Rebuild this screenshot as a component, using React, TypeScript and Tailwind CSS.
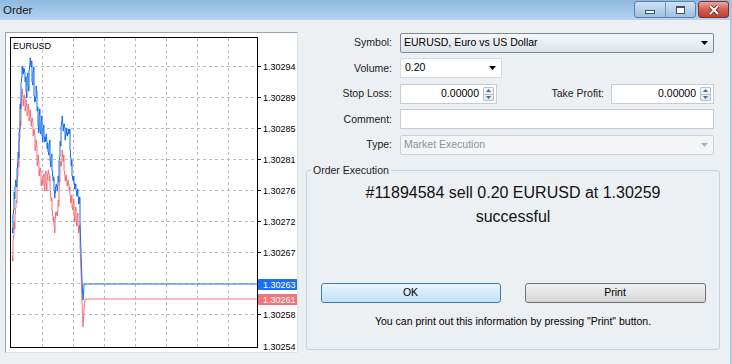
import React from 'react';

const FONT = "font-['Liberation_Sans',Arial,sans-serif]";

const blueLine = [
  [12, 228], [13, 214], [14, 192], [15, 186], [16, 184], [17, 168], [18, 152], [19, 132], [20, 104], [21, 82],
  [22, 66], [23, 74], [24, 69], [25, 82], [26, 92], [27, 76], [28, 86], [29, 70], [30, 58], [31, 67],
  [32, 82], [33, 72], [34, 96], [35, 101], [36, 86], [37, 111], [38, 126], [39, 115], [40, 131], [41, 121],
  [42, 136], [43, 128], [44, 137], [45, 141], [46, 134], [47, 149], [48, 152], [49, 145], [50, 161], [51, 157],
  [52, 171], [53, 181], [54, 191], [55, 193], [56, 184], [57, 191], [58, 176], [59, 160], [60, 141], [61, 126],
  [62, 116], [63, 131], [64, 124], [65, 140], [66, 128], [67, 136], [68, 129], [69, 133], [70, 151], [71, 166],
  [72, 176], [73, 181], [74, 183], [75, 187], [76, 191], [77, 193], [78, 197], [79, 203], [80, 222], [81, 252],
  [82, 280], [83, 300], [84, 286], [84, 284], [257, 284],
];

const redLine = [
  [12, 256], [13, 240], [14, 222], [15, 214], [16, 200], [17, 181], [18, 161], [19, 141], [20, 121], [21, 101],
  [22, 89], [23, 106], [24, 95], [25, 111], [26, 100], [27, 116], [28, 104], [29, 121], [30, 110], [31, 126],
  [32, 118], [33, 136], [34, 129], [35, 151], [36, 140], [37, 166], [38, 155], [39, 176], [40, 168], [41, 186],
  [42, 179], [43, 177], [44, 186], [45, 175], [46, 184], [47, 180], [48, 170], [49, 181], [50, 191], [51, 201],
  [52, 211], [53, 221], [54, 226], [55, 218], [56, 212], [57, 216], [58, 200], [59, 185], [60, 161], [61, 166],
  [62, 150], [63, 161], [64, 171], [65, 181], [66, 175], [67, 186], [68, 180], [69, 191], [70, 196], [71, 201],
  [72, 207], [73, 204], [74, 216], [75, 210], [76, 221], [77, 217], [78, 226], [79, 231], [80, 246], [81, 271],
  [82, 301], [83, 327], [84, 311], [85, 299], [257, 299],
];

const gridY = [66, 97, 128, 159, 190, 221, 252, 283, 314];
const gridX = [42, 73, 104, 135, 166, 197, 228];
const prices: [string, number][] = [
  ['1.30294', 66], ['1.30289', 97], ['1.30285', 128], ['1.30281', 159], ['1.30276', 190],
  ['1.30272', 221], ['1.30267', 252], ['1.30258', 314], ['1.30254', 346],
];

// tick charts are step lines with a lot of noise: add a jitter step between points
const jitter = [5, -4, 7, -6, 3, -5, 6, -3];
const steps = (a: number[][]) => {
  const out: string[] = [];
  a.forEach((p, i) => {
    out.push(`${p[0]},${p[1]}`);
    const n = a[i + 1];
    if (n && n[0] - p[0] === 1 && p[0] < 80) {
      const j = jitter[i % jitter.length];
      out.push(`${p[0] + 0.5},${p[1]}`, `${p[0] + 0.5},${p[1] + j}`, `${n[0]},${p[1] + j}`);
    }
  });
  return out.join(' ');
};

function TitleBar() {
  return (
    <div className="flex h-[20px] items-start justify-between bg-gradient-to-b from-[#8fb9e1] to-[#b3d3f0] pl-[3px] pr-[1px]">
      <span className="mt-[3px] text-[11.5px] leading-[14px] text-[#1a1a1a]">Order</span>
      <div className="mt-[1px] flex">
        <div className="flex h-[17px] overflow-hidden rounded-[3px] border border-[#5e81a8] bg-gradient-to-b from-[#cfe2f5] to-[#9ec0e2]">
          <div className="flex w-[30px] items-end justify-center pb-[3px]">
            <div className="h-[4px] w-[10px] border border-[#3b5169] bg-white" />
          </div>
          <div className="flex w-[30px] items-center justify-center border-l border-[#6f92b8]">
            <div className="h-[8px] w-[9px] border border-t-2 border-[#3b5169] bg-white" />
          </div>
        </div>
        <div className="ml-[2px] flex h-[17px] w-[31px] items-center justify-center rounded-[3px] border border-[#7d2f29] bg-gradient-to-b from-[#e8a69d] via-[#d35c50] to-[#c13f33]">
          <svg width="12" height="10" viewBox="0 0 12 10">
            <path d="M2 1l8 8M10 1L2 9" stroke="#5a1e19" strokeWidth="3.4" />
            <path d="M2 1l8 8M10 1L2 9" stroke="#ffffff" strokeWidth="2" />
          </svg>
        </div>
      </div>
    </div>
  );
}

function ChartPanel() {
  return (
    <div className="ml-[5px] mt-[12px] h-[321px] w-[293px] border border-b-[#dfe4e9] border-l-[#9aa4ae] border-r-[#dfe4e9] border-t-[#9aa4ae] bg-white">
      <svg width="291" height="319" viewBox="6 33 291 319" className="block">
        {gridY.map((y) => (
          <line key={'h' + y} x1="11" x2="257" y1={y + 0.5} y2={y + 0.5} stroke="#bcbcbc" strokeDasharray="3 3" />
        ))}
        {gridX.map((x) => (
          <line key={'v' + x} x1={x + 0.5} x2={x + 0.5} y1="38" y2="347" stroke="#bcbcbc" strokeDasharray="3 3" />
        ))}
        {gridY.map((y) => (
          <line key={'t' + y} x1="257" x2="261" y1={y + 0.5} y2={y + 0.5} stroke="#000" />
        ))}
        <polyline points={steps(redLine)} fill="none" stroke="#f2737c" strokeWidth="1" />
        <polyline points={steps(blueLine)} fill="none" stroke="#1a70f0" strokeWidth="1" />
        <rect x="10.5" y="37.5" width="247" height="310" fill="none" stroke="#000" />
        <text x="13" y="49" fontSize="9" fontFamily="Liberation Sans, Arial, sans-serif" fill="#000">
          EURUSD
        </text>
        {prices.map(([p, y]) => (
          <text key={p} x="263" y={y + 3.5} fontSize="9" fontFamily="Liberation Sans, Arial, sans-serif" fill="#000">
            {p}
          </text>
        ))}
        <rect x="258" y="279" width="39" height="11" fill="#1a70f0" />
        <text x="263" y="288" fontSize="9" fontFamily="Liberation Sans, Arial, sans-serif" fill="#fff">
          1.30263
        </text>
        <rect x="258" y="294" width="39" height="11" fill="#f2737c" />
        <text x="263" y="303" fontSize="9" fontFamily="Liberation Sans, Arial, sans-serif" fill="#fff">
          1.30261
        </text>
      </svg>
    </div>
  );
}

function Arrow({ color = '#000' }: { color?: string }) {
  return (
    <svg width="7" height="4" viewBox="0 0 7 4" className="shrink-0">
      <path d="M0 0h7L3.5 4z" fill={color} />
    </svg>
  );
}

function Spinner() {
  return (
    <div className="my-[2px] mr-[2px] flex w-[11px] flex-col rounded-[1px] border border-[#b7c4d2] bg-gradient-to-b from-[#f3f6f9] to-[#dfe7ef]">
      <div className="flex flex-1 items-center justify-center border-b border-[#b7c4d2]">
        <svg width="5" height="3" viewBox="0 0 5 3">
          <path d="M0 3h5L2.5 0z" fill="#4a6788" />
        </svg>
      </div>
      <div className="flex flex-1 items-center justify-center">
        <svg width="5" height="3" viewBox="0 0 5 3">
          <path d="M0 0h5L2.5 3z" fill="#4a6788" />
        </svg>
      </div>
    </div>
  );
}

function Label({ children, w = 'w-[94px]' }: { children: React.ReactNode; w?: string }) {
  return <div className={`${w} shrink-0 text-right`}>{children}</div>;
}

function FormPanel() {
  return (
    <div className="mt-[13px] flex flex-col text-[10.5px] text-[#1b1b1b]">
      <div className="flex flex-col gap-[5px]">
        <div className="flex h-[20px] items-center">
          <Label>Symbol:</Label>
          <div className="ml-[8px] flex h-[20px] w-[314px] items-center justify-between rounded-[2px] border border-[#7d8b99] bg-gradient-to-b from-[#f6f8fa] to-[#dde3ea] pl-[3px] pr-[5px] text-black">
            <span>EURUSD, Euro vs US Dollar</span>
            <Arrow />
          </div>
        </div>
        <div className="flex h-[21px] items-start">
          <Label>
            <div className="leading-[20px]">Volume:</div>
          </Label>
          <div className="ml-[8px] flex h-[20px] w-[102px] items-center justify-between border border-[#d3dbe3] bg-white pl-[4px] pr-[5px] text-black">
            <span>0.20</span>
            <Arrow />
          </div>
        </div>
        <div className="flex h-[20px] items-center">
          <Label>Stop Loss:</Label>
          <div className="ml-[8px] flex h-[20px] w-[97px] border border-[#c3cdd8] bg-white text-black">
            <span className="flex-1 self-center pr-[4px] text-right">0.00000</span>
            <Spinner />
          </div>
          <Label w="w-[107px]">Take Profit:</Label>
          <div className="ml-[7px] flex h-[20px] w-[103px] border border-[#c3cdd8] bg-white text-black">
            <span className="flex-1 self-center pr-[4px] text-right">0.00000</span>
            <Spinner />
          </div>
        </div>
        <div className="flex h-[21px] items-start">
          <Label>
            <div className="leading-[20px]">Comment:</div>
          </Label>
          <div className="ml-[8px] h-[20px] w-[314px] border border-[#c3cdd8] bg-white" />
        </div>
        <div className="flex h-[20px] items-center">
          <Label>Type:</Label>
          <div className="ml-[8px] flex h-[20px] w-[314px] items-center justify-between rounded-[2px] border border-[#c9d1d9] bg-[#f3f5f7] pl-[3px] pr-[5px] text-[#8a929a]">
            <span>Market Execution</span>
            <Arrow color="#aab2ba" />
          </div>
        </div>
      </div>

      <fieldset className="ml-[8px] mt-[8px] w-[414px] rounded-[3px] border border-[#c6d3e0] px-0 pb-[21px] pt-[4px]">
        <legend className="ml-[4px] px-[2px] text-[10.5px] leading-[14px]">Order Execution</legend>
        <div className="text-center text-[16px] leading-[24px] text-[#111]">
          <div>#11894584 sell 0.20 EURUSD at 1.30259</div>
          <div>successful</div>
        </div>
        <div className="mt-[54px] flex justify-center gap-[24px]">
          <button className="h-[20px] w-[180px] rounded-[3px] border border-[#3d7db3] bg-gradient-to-b from-[#eaf6fd] to-[#bfe2f6] text-[10.5px] text-black">
            OK
          </button>
          <button className="h-[20px] w-[181px] rounded-[3px] border border-[#737373] bg-gradient-to-b from-[#f1f1f1] to-[#d6d6d6] text-[10.5px] text-black">
            Print
          </button>
        </div>
        <div className="mt-[11px] text-center leading-[14px] text-black">
          You can print out this information by pressing "Print" button.
        </div>
      </fieldset>
    </div>
  );
}

export default function App() {
  return (
    <div className={`flex h-[364px] w-[732px] flex-col overflow-hidden border-r-2 border-[#a9c9e8] bg-[#edf0f3] ${FONT}`}>
      <TitleBar />
      <div className="flex flex-1 items-start">
        <ChartPanel />
        <FormPanel />
      </div>
    </div>
  );
}
